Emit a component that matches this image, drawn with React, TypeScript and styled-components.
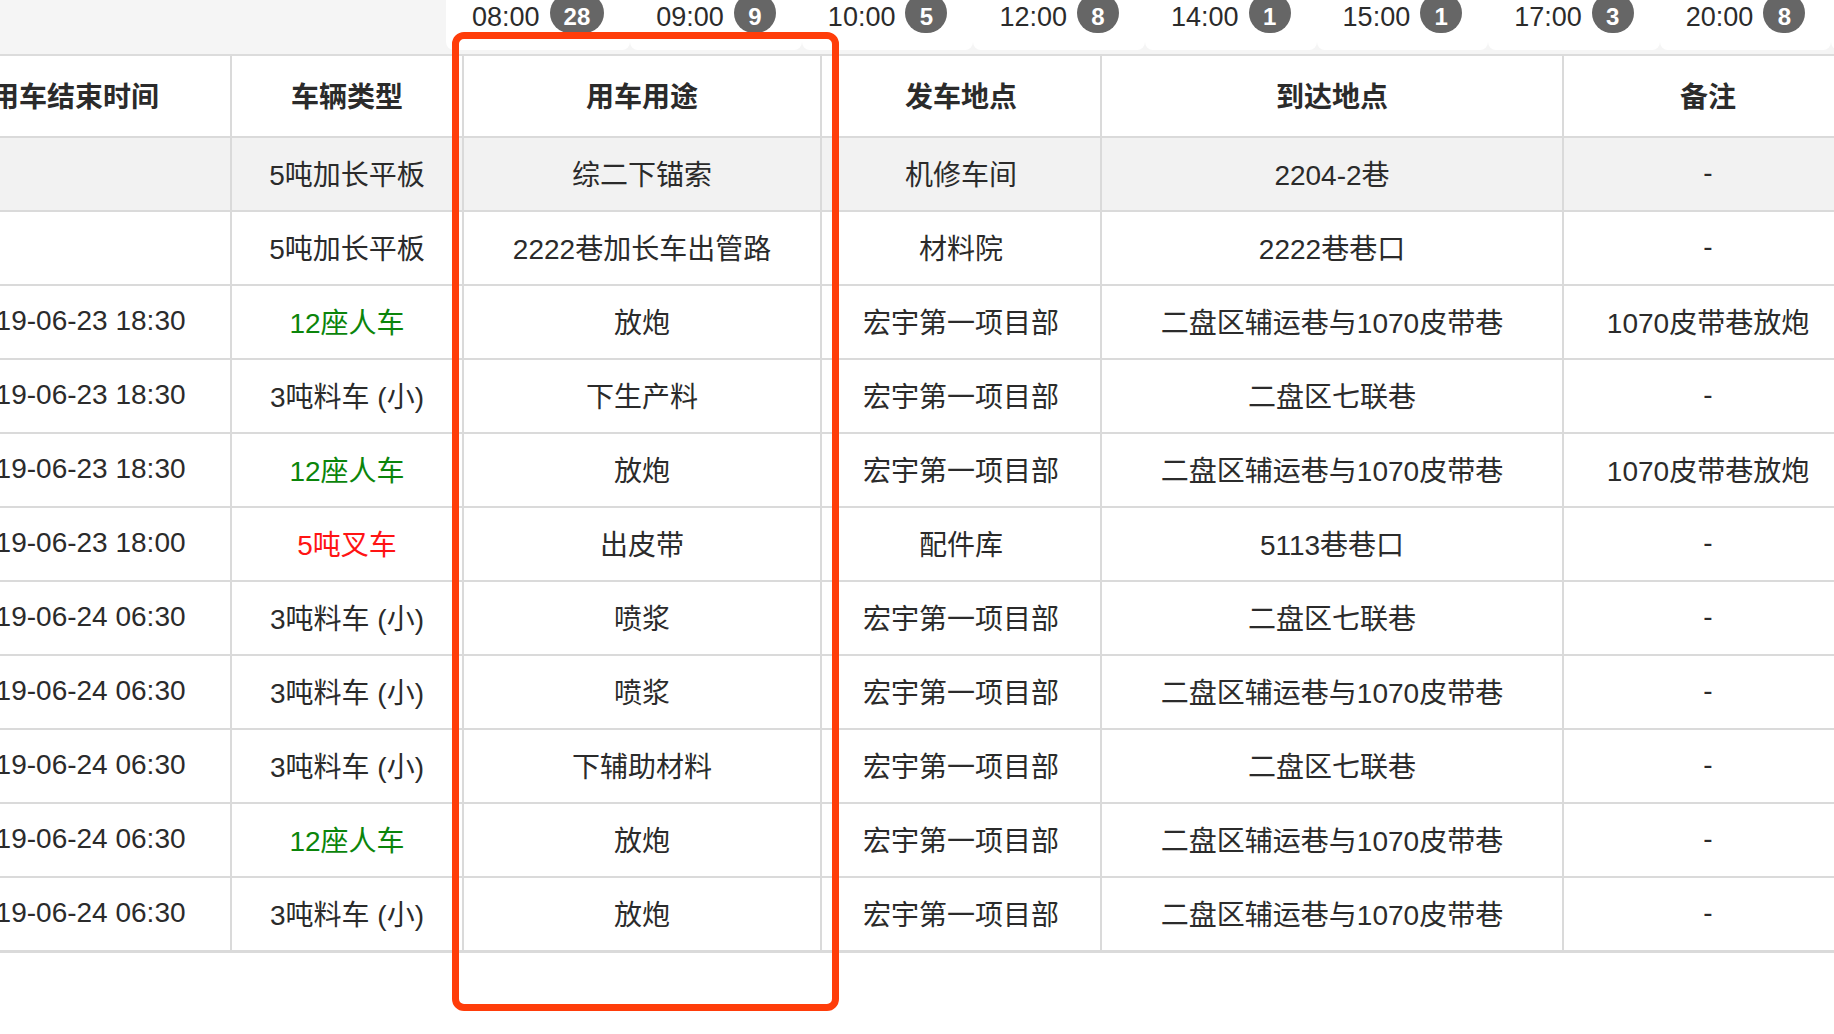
import React from "react";
import styled, { createGlobalStyle } from "styled-components";

const GlobalStyle = createGlobalStyle`
  html, body { margin: 0; padding: 0; background: #fff; overflow: hidden; }
  body { font-family: "Liberation Sans", "Noto Sans CJK SC", sans-serif; color: #333; }
  * { box-sizing: border-box; }
`;

const Page = styled.div`
  position: relative;
  width: 1834px;
  height: 1034px;
  overflow: hidden;
  background: #fff;
`;

const TimeBar = styled.div`
  display: flex;
  height: 56px;
  padding-left: 446px;
  background: #f5f5f5;
  border-bottom: 2px solid #dcdcdc;
  overflow: hidden;
`;

const Tab = styled.div`
  flex: none;
  display: flex;
  align-items: flex-start;
  gap: 10px;
  height: 50px;
  padding: 0 26px 0 26px;
  background: #fff;
  border-radius: 0 0 8px 8px;
`;

const TimeLabel = styled.span`
  font-size: 27px;
  line-height: 34px;
  color: #2b2b2b;
`;

const CountBadge = styled.span`
  min-width: 42px;
  height: 40px;
  margin-top: -7px;
  padding: 7px 14px 0;
  line-height: 33px;
  border-radius: 21px;
  background: #666;
  color: #fff;
  font-weight: bold;
  font-size: 24px;
  text-align: center;
`;

const Table = styled.div`
  margin-left: -80px;
  width: max-content;
`;

const Row = styled.div<{ $head?: boolean; $active?: boolean; $last?: boolean }>`
  display: grid;
  grid-template-columns: 312px 232px 358px 280px 462px 290px;
  height: ${(p) => (p.$head ? 82 : p.$last ? 75 : 74)}px;
  border-bottom: ${(p) => (p.$last ? 3 : 2)}px solid #dadada;
  background: ${(p) => (p.$active ? "#f2f2f2" : "#fff")};
`;

const Cell = styled.div<{ $head?: boolean; $tone?: "green" | "red" }>`
  display: flex;
  align-items: center;
  justify-content: center;
  padding-bottom: 2px;
  border-right: 2px solid #dadada;
  font-size: 28px;
  white-space: nowrap;
  font-weight: ${(p) => (p.$head ? "bold" : "normal")};
  color: ${(p) => (p.$tone === "green" ? "#0b850b" : p.$tone === "red" ? "#ff1414" : "#2b2b2b")};
`;

const Highlight = styled.div`
  position: absolute;
  left: 452px;
  top: 32px;
  width: 387px;
  height: 979px;
  border: 7px solid #ff3d0a;
  border-radius: 12px;
  pointer-events: none;
`;

const tabs: [string, number][] = [
  ["08:00", 28],
  ["09:00", 9],
  ["10:00", 5],
  ["12:00", 8],
  ["14:00", 1],
  ["15:00", 1],
  ["17:00", 3],
  ["20:00", 8],
  ["22:00", 2],
];

const headers = ["用车结束时间", "车辆类型", "用车用途", "发车地点", "到达地点", "备注"];

type Tone = "green" | "red" | undefined;
type RowData = { end: string; car: string; tone?: Tone; use: string; from: string; to: string; note: string };

const SMALL = "3吨料车 (小)";
const LONG = "二盘区辅运巷与1070皮带巷";
const HY = "宏宇第一项目部";

const rows: RowData[] = [
  { end: "", car: "5吨加长平板", use: "综二下锚索", from: "机修车间", to: "2204-2巷", note: "-" },
  { end: "", car: "5吨加长平板", use: "2222巷加长车出管路", from: "材料院", to: "2222巷巷口", note: "-" },
  { end: "2019-06-23 18:30", car: "12座人车", tone: "green", use: "放炮", from: HY, to: LONG, note: "1070皮带巷放炮" },
  { end: "2019-06-23 18:30", car: SMALL, use: "下生产料", from: HY, to: "二盘区七联巷", note: "-" },
  { end: "2019-06-23 18:30", car: "12座人车", tone: "green", use: "放炮", from: HY, to: LONG, note: "1070皮带巷放炮" },
  { end: "2019-06-23 18:00", car: "5吨叉车", tone: "red", use: "出皮带", from: "配件库", to: "5113巷巷口", note: "-" },
  { end: "2019-06-24 06:30", car: SMALL, use: "喷浆", from: HY, to: "二盘区七联巷", note: "-" },
  { end: "2019-06-24 06:30", car: SMALL, use: "喷浆", from: HY, to: LONG, note: "-" },
  { end: "2019-06-24 06:30", car: SMALL, use: "下辅助材料", from: HY, to: "二盘区七联巷", note: "-" },
  { end: "2019-06-24 06:30", car: "12座人车", tone: "green", use: "放炮", from: HY, to: LONG, note: "-" },
  { end: "2019-06-24 06:30", car: SMALL, use: "放炮", from: HY, to: LONG, note: "-" },
];

export default function App() {
  return (
    <>
      <GlobalStyle />
      <Page>
        <TimeBar>
          {tabs.map(([t, n]) => (
            <Tab key={t}>
              <TimeLabel>{t}</TimeLabel>
              <CountBadge>{n}</CountBadge>
            </Tab>
          ))}
        </TimeBar>
        <Table>
          <Row $head>
            {headers.map((h) => (
              <Cell key={h} $head>
                {h}
              </Cell>
            ))}
          </Row>
          {rows.map((r, i) => (
            <Row key={i} $active={i === 0} $last={i === rows.length - 1}>
              <Cell>{r.end}</Cell>
              <Cell $tone={r.tone}>{r.car}</Cell>
              <Cell>{r.use}</Cell>
              <Cell>{r.from}</Cell>
              <Cell>{r.to}</Cell>
              <Cell>{r.note}</Cell>
            </Row>
          ))}
        </Table>
        <Highlight />
      </Page>
    </>
  );
}
